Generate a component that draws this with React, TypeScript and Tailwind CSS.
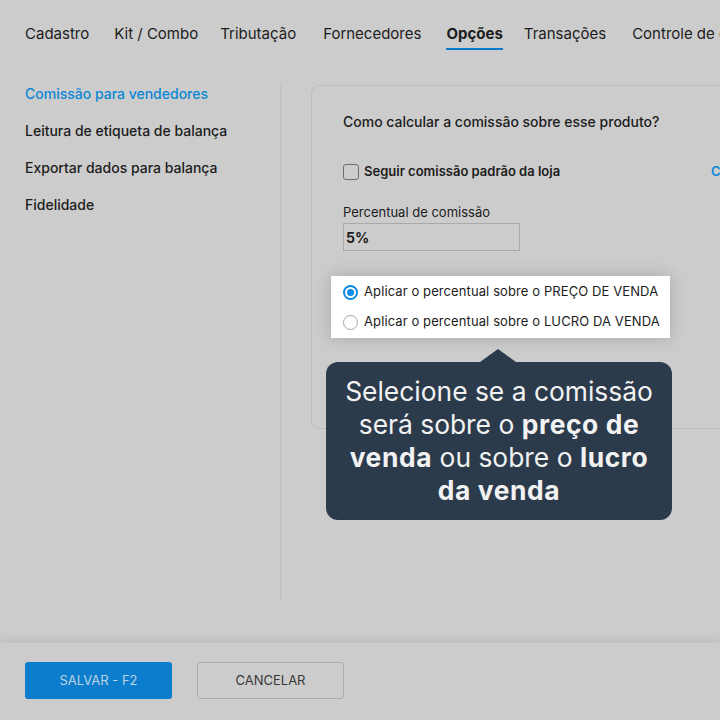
const tabs = [
  { label: "Cadastro", cls: "border-transparent" },
  { label: "Kit / Combo", cls: "ml-[25px] border-transparent" },
  { label: "Tributação", cls: "ml-[22px] border-transparent" },
  { label: "Fornecedores", cls: "ml-[27px] border-transparent" },
  { label: "Opções", cls: "ml-[25px] font-bold border-[#0a7acc]" },
  { label: "Transações", cls: "ml-[21px] border-transparent" },
  { label: "Controle de estoque", cls: "ml-[26px] border-transparent" },
];

const sideItems = [
  "Comissão para vendedores",
  "Leitura de etiqueta de balança",
  "Exportar dados para balança",
  "Fidelidade",
];

function Radio({ checked, label }: { checked?: boolean; label: string }) {
  return (
    <label className="flex items-center gap-[6px] h-[30px]">
      {checked ? (
        <span className="w-[15px] h-[15px] rounded-full border-2 border-[#0a8ae6] flex items-center justify-center bg-white">
          <span className="w-[7px] h-[7px] rounded-full bg-[#0a8ae6]" />
        </span>
      ) : (
        <span className="w-[15px] h-[15px] rounded-full border border-[#a6a6a6] bg-white" />
      )}
      <span className="text-[13px] tracking-[0.1px] text-[#1c1c1c]">{label}</span>
    </label>
  );
}

export default function App() {
  return (
    <div
      className="relative w-[720px] h-[720px] overflow-hidden bg-[#cccccc] flex flex-col text-[#1c1c1c]"
      style={{ fontFamily: "Inter, 'Noto Sans', sans-serif" }}
    >
      {/* tabs */}
      <nav className="flex pl-[25px] pt-[25px] whitespace-nowrap h-[84px]">
        {tabs.map((t) => (
          <div key={t.label} className={`h-[25px] leading-[18px] text-[15px] border-b-2 ${t.cls}`}>
            {t.label}
          </div>
        ))}
      </nav>

      <div className="flex h-[518px]">
        <aside className="w-[281px] shrink-0 border-r border-[#c0c0c0] pl-[25px] flex flex-col gap-[17px]">
          {sideItems.map((s, i) => (
            <div
              key={s}
              className={`text-[14px] leading-5 font-medium ${i === 0 ? "text-[#0b87d6]" : ""}`}
            >
              {s}
            </div>
          ))}
        </aside>

        <section className="ml-[30px] mt-px w-[440px] shrink-0 h-[344px] border border-[#bdbdbd] rounded-lg pl-[31px] pt-[26px]">
          <div className="text-[14px] leading-5 font-medium">Como calcular a comissão sobre esse produto?</div>

          <div className="flex items-center mt-[30px] h-[20px]">
            <div className="w-[368px] shrink-0 flex items-center gap-[5px]">
              <span className="w-[16px] h-[16px] rounded-[3px] border border-[#6e6e6e]" />
              <span className="text-[13px] font-semibold">Seguir comissão padrão da loja</span>
            </div>
            <span className="shrink-0 text-[13px] font-semibold text-[#0b87d6] whitespace-nowrap">Configurar</span>
          </div>

          <div className="mt-[22px] text-[13px] leading-4">Percentual de comissão</div>
          <div className="mt-[3px] w-[177px] h-[28px] border border-[#a9a9a9] flex items-center pl-[2px] text-[14px] font-bold">
            5%
          </div>

          <div className="mt-[25px] -ml-[12px] w-fit bg-white pl-[12px] pr-[10px] py-[1px] shadow-[0_0_16px_rgba(0,0,0,0.18)]">
            <Radio checked label="Aplicar o percentual sobre o PREÇO DE VENDA" />
            <Radio label="Aplicar o percentual sobre o LUCRO DA VENDA" />
          </div>
        </section>
      </div>

      <footer className="mt-auto h-[78px] shadow-[0_-3px_8px_rgba(0,0,0,0.07)] border-t border-[#c4c4c4] flex gap-[25px] pl-[25px] pt-[19px]">
        <button className="w-[147px] h-[37px] rounded-[3px] bg-[#0b7dcc] text-[#bfd3e4] text-[13px]">
          SALVAR - F2
        </button>
        <button className="w-[147px] h-[37px] rounded-[3px] border border-[#acacac] text-[#383838] text-[13px]">
          CANCELAR
        </button>
      </footer>

      {/* tooltip */}
      <div className="absolute left-[326px] top-[349px] w-[346px] flex flex-col items-center">
        <div className="w-0 h-0 border-l-[18px] border-r-[18px] border-b-[13px] border-l-transparent border-r-transparent border-b-[#2c3b4c] -ml-[2px]" />
        <div className="w-full h-[158px] rounded-[12px] bg-[#2c3b4c] text-[#f2f2f2] text-[26.4px] leading-[33px] text-center pt-[13px] px-[10px]">
          Selecione se a comissão será sobre o{" "}
          <b className="tracking-[0.6px]">preço de venda</b> ou sobre o{" "}
          <b className="tracking-[0.6px]">lucro da venda</b>
        </div>
      </div>
    </div>
  );
}
